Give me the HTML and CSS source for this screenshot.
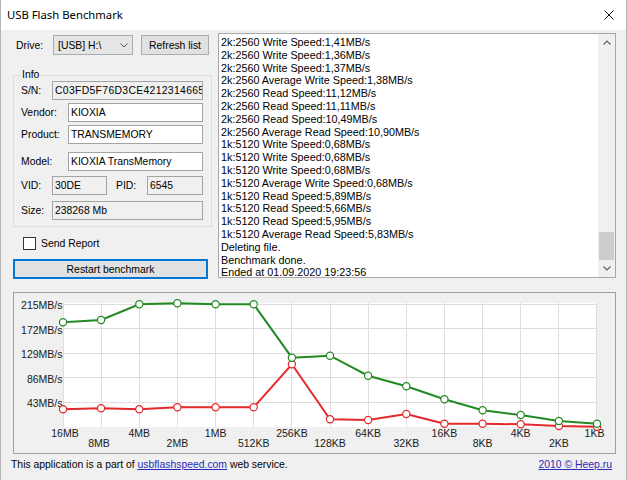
FILE: index.html
```html
<!DOCTYPE html>
<html>
<head>
<meta charset="utf-8">
<title>USB Flash Benchmark</title>
<link rel="stylesheet" href="styles.css">
</head>
<body>
<div class="window">
  <div class="titlebar">
    <span class="title">USB Flash Benchmark</span>
    <svg class="close" width="10" height="10" viewBox="0 0 10 10"><path d="M0.5 0.5L9.5 9.5M9.5 0.5L0.5 9.5" stroke="#111" stroke-width="1" fill="none"/></svg>
  </div>
  <div class="content">
    <div class="top">
      <div class="left">
        <div class="drive-row">
          <span class="lbl drive-lbl">Drive:</span>
          <div class="combo"><span>[USB] H:\</span><svg width="8" height="5" viewBox="0 0 8 5"><path d="M0.5 0.5L4 4L7.5 0.5" stroke="#555" stroke-width="1" fill="none"/></svg></div>
          <div class="btn refresh">Refresh list</div>
        </div>
        <fieldset class="info">
          <legend>Info</legend>
          <div class="row"><span class="lbl w31">S/N:</span><div class="tb ro w151 serial">C03FD5F76D3CE42123146653</div></div>
          <div class="row mt3"><span class="lbl w47">Vendor:</span><div class="tb w135">KIOXIA</div></div>
          <div class="row mt3"><span class="lbl w47">Product:</span><div class="tb w135">TRANSMEMORY</div></div>
          <div class="row mt8"><span class="lbl w47">Model:</span><div class="tb w135">KIOXIA TransMemory</div></div>
          <div class="row mt5"><span class="lbl w31">VID:</span><div class="tb ro w55">30DE</div><span class="lbl pid-lbl">PID:</span><div class="tb ro w56">6545</div></div>
          <div class="row mt6"><span class="lbl w31">Size:</span><div class="tb ro w151">238268 Mb</div></div>
        </fieldset>
        <div class="check"><span class="box"></span><span class="check-lbl">Send Report</span></div>
        <div class="btn restart">Restart benchmark</div>
      </div>
      <div class="log">
        <div class="log-text">
          <div>2k:2560 Write Speed:1,41MB/s</div>
          <div>2k:2560 Write Speed:1,36MB/s</div>
          <div>2k:2560 Write Speed:1,37MB/s</div>
          <div>2k:2560 Average Write Speed:1,38MB/s</div>
          <div>2k:2560 Read Speed:11,12MB/s</div>
          <div>2k:2560 Read Speed:11,11MB/s</div>
          <div>2k:2560 Read Speed:10,49MB/s</div>
          <div>2k:2560 Average Read Speed:10,90MB/s</div>
          <div>1k:5120 Write Speed:0,68MB/s</div>
          <div>1k:5120 Write Speed:0,68MB/s</div>
          <div>1k:5120 Write Speed:0,68MB/s</div>
          <div>1k:5120 Average Write Speed:0,68MB/s</div>
          <div>1k:5120 Read Speed:5,89MB/s</div>
          <div>1k:5120 Read Speed:5,66MB/s</div>
          <div>1k:5120 Read Speed:5,95MB/s</div>
          <div>1k:5120 Average Read Speed:5,83MB/s</div>
          <div>Deleting file.</div>
          <div>Benchmark done.</div>
          <div>Ended at 01.09.2020 19:23:56</div>
        </div>
        <div class="scrollbar">
          <div class="sb-btn"><svg width="8" height="5" viewBox="0 0 8 5"><path d="M0.5 4.5L4 1L7.5 4.5" stroke="#606060" stroke-width="1.2" fill="none"/></svg></div>
          <div class="sb-track"><div class="sb-thumb"></div></div>
          <div class="sb-btn"><svg width="8" height="5" viewBox="0 0 8 5"><path d="M0.5 0.5L4 4L7.5 0.5" stroke="#606060" stroke-width="1.2" fill="none"/></svg></div>
        </div>
      </div>
    </div>
    <div class="chart">
      <svg class="chart-svg" width="601" height="160" viewBox="0 0 601 160">
        <rect x="49" y="10" width="534" height="124" fill="#fff"/>
        <g stroke="#dedede" stroke-width="1" fill="none">
          <path d="M49.5 10V134M87.5 10V134M125.5 10V134M163.5 10V134M201.5 10V134M239.5 10V134M277.5 10V134M316.5 10V134M354.5 10V134M392.5 10V134M430.5 10V134M468.5 10V134M506.5 10V134M544.5 10V134M582.5 10V134"/>
          <path d="M49 11.5H583M49 35.5H583M49 60.5H583M49 84.5H583M49 109.5H583"/>
        </g>
        <g class="ylab" text-anchor="end">
          <text x="48.5" y="16">215MB/s</text>
          <text x="48.5" y="40.6">172MB/s</text>
          <text x="48.5" y="65.2">129MB/s</text>
          <text x="48.5" y="89.8">86MB/s</text>
          <text x="48.5" y="114.4">43MB/s</text>
        </g>
        <g class="xlab" text-anchor="middle">
          <text x="51" y="143.8">16MB</text>
          <text x="85" y="153.8">8MB</text>
          <text x="125.3" y="143.8">4MB</text>
          <text x="163.4" y="153.8">2MB</text>
          <text x="201.6" y="143.8">1MB</text>
          <text x="239.7" y="153.8">512KB</text>
          <text x="277.9" y="143.8">256KB</text>
          <text x="316" y="153.8">128KB</text>
          <text x="354.1" y="143.8">64KB</text>
          <text x="392.3" y="153.8">32KB</text>
          <text x="430.4" y="143.8">16KB</text>
          <text x="468.6" y="153.8">8KB</text>
          <text x="506.7" y="143.8">4KB</text>
          <text x="544.9" y="153.8">2KB</text>
          <text x="580.5" y="143.8">1KB</text>
        </g>
        <g stroke="#e3292b" fill="none">
          <polyline stroke-width="2" points="49,116.3 87.1,115.3 125.3,116.3 163.4,114.3 201.6,114.3 239.7,114.3 277.9,71.3 316,126.3 354.1,127 392.3,121 430.4,130.7 468.6,130.7 506.7,131.3 544.9,133 583,133.7"/>
          <g fill="#fff" stroke-width="1.2">
            <circle cx="49" cy="116.3" r="3.6"/><circle cx="87.1" cy="115.3" r="3.6"/><circle cx="125.3" cy="116.3" r="3.6"/><circle cx="163.4" cy="114.3" r="3.6"/><circle cx="201.6" cy="114.3" r="3.6"/><circle cx="239.7" cy="114.3" r="3.6"/><circle cx="277.9" cy="71.3" r="3.6"/><circle cx="316" cy="126.3" r="3.6"/><circle cx="354.1" cy="127" r="3.6"/><circle cx="392.3" cy="121" r="3.6"/><circle cx="430.4" cy="130.7" r="3.6"/><circle cx="468.6" cy="130.7" r="3.6"/><circle cx="506.7" cy="131.3" r="3.6"/><circle cx="544.9" cy="133" r="3.6"/><circle cx="583" cy="133.7" r="3.6"/>
          </g>
        </g>
        <g stroke="#238a23" fill="none">
          <polyline stroke-width="2" points="49,29.3 87.1,27 125.3,11.3 163.4,10.3 201.6,11.3 239.7,11.3 277.9,64.7 316,62.7 354.1,82.7 392.3,93.3 430.4,106.3 468.6,117.3 506.7,122 544.9,128 583,130.7"/>
          <g fill="#fff" stroke-width="1.2">
            <circle cx="49" cy="29.3" r="3.6"/><circle cx="87.1" cy="27" r="3.6"/><circle cx="125.3" cy="11.3" r="3.6"/><circle cx="163.4" cy="10.3" r="3.6"/><circle cx="201.6" cy="11.3" r="3.6"/><circle cx="239.7" cy="11.3" r="3.6"/><circle cx="277.9" cy="64.7" r="3.6"/><circle cx="316" cy="62.7" r="3.6"/><circle cx="354.1" cy="82.7" r="3.6"/><circle cx="392.3" cy="93.3" r="3.6"/><circle cx="430.4" cy="106.3" r="3.6"/><circle cx="468.6" cy="117.3" r="3.6"/><circle cx="506.7" cy="122" r="3.6"/><circle cx="544.9" cy="128" r="3.6"/><circle cx="583" cy="130.7" r="3.6"/>
          </g>
        </g>
      </svg>
    </div>
  </div>
  <div class="footer">
    <span>This application is a part of <a class="link" href="#">usbflashspeed.com</a> web service.</span>
    <a class="link" href="#">2010 © Heep.ru</a>
  </div>
</div>
</body>
</html>
```
FILE: styles.css
```css
* { box-sizing: border-box; }
html, body { margin: 0; padding: 0; }
body {
  width: 627px;
  height: 480px;
  overflow: hidden;
  background: #f0f0f0;
  font-family: "Liberation Sans", Arial, sans-serif;
  font-size: 10.4px;
  color: #000;
}
.window {
  width: 627px;
  height: 480px;
  border-left: 1px solid #b5b5b5;
  border-right: 1px solid #b5b5b5;
  display: flex;
  flex-direction: column;
}
.titlebar {
  height: 30px;
  flex: none;
  background: #fff;
  display: flex;
  align-items: center;
  justify-content: space-between;
  padding-left: 6px;
}
.title {
  font-family: "Noto Sans", "Open Sans", sans-serif;
  font-size: 11.3px;
  color: #000;
  margin-top: -1px;
}
.close { margin-right: 12px; display: block; }
.content {
  padding: 0 10px 0 12px;
  display: flex;
  flex-direction: column;
}
.top {
  display: flex;
  align-items: flex-start;
  gap: 5px;
  height: 248px;
}
.left {
  width: 200px;
  display: flex;
  flex-direction: column;
}
.drive-row {
  display: flex;
  align-items: center;
  margin-top: 5px;
  height: 20px;
}
.lbl { flex: none; white-space: nowrap; }
.drive-lbl { width: 37px; margin-left: 3px; }
.combo {
  width: 80px;
  height: 20px;
  border: 1px solid #acacac;
  background: #e5e5e5;
  display: flex;
  align-items: center;
  justify-content: space-between;
  padding: 0 4px;
}
.combo svg { display: block; }
.btn {
  background: #e1e1e1;
  border: 1px solid #adadad;
  display: flex;
  align-items: center;
  justify-content: center;
  white-space: nowrap;
}
.refresh { margin-left: 8px; width: 68px; height: 20px; }
.info {
  margin: 14px 0 0 0;
  width: 199px;
  min-width: 0;
  border: 1px solid #dcdcdc;
  padding: 0 0 6px 7px;
}
.info legend {
  padding: 0 1px;
  line-height: 12px;
  font-size: 10.4px;
}
.row {
  display: flex;
  align-items: center;
  height: 19px;
}
.mt3 { margin-top: 3px; }
.mt5 { margin-top: 5px; }
.mt6 { margin-top: 6px; }
.mt8 { margin-top: 8px; }
.w31 { width: 31px; }
.w47 { width: 47px; }
.pid-lbl { margin-left: 9px; width: 31px; }
.tb {
  height: 19px;
  border: 1px solid #a4a4a4;
  background: #fff;
  padding-left: 2px;
  line-height: 17px;
  white-space: nowrap;
  overflow: hidden;
  flex: none;
}
.tb.ro { background: #f0f0f0; }
.serial { letter-spacing: 0.32px; }
.w151 { width: 151px; }
.w135 { width: 135px; }
.w55 { width: 55px; }
.w56 { width: 56px; }
.check {
  margin-top: 10px;
  height: 13px;
  display: flex;
  align-items: center;
  padding-left: 10px;
}
.box {
  width: 13px;
  height: 13px;
  border: 1px solid #333;
  background: #fff;
  flex: none;
}
.check-lbl { margin-left: 5px; }
.restart {
  margin-top: 9px;
  width: 195px;
  height: 20px;
  border: 2px solid #0078d7;
}
.log {
  margin-top: 3px;
  width: 398px;
  height: 245px;
  border: 1px solid #a8a8a8;
  background: #fff;
  display: flex;
}
.log-text {
  flex: 1;
  padding: 2px 0 0 2px;
  font-size: 10.8px;
  line-height: 12.8px;
  overflow: hidden;
  white-space: nowrap;
}
.scrollbar {
  width: 17px;
  flex: none;
  background: #f0f0f0;
  display: flex;
  flex-direction: column;
}
.sb-btn {
  height: 17px;
  flex: none;
  display: flex;
  align-items: center;
  justify-content: center;
}
.sb-btn svg { display: block; }
.sb-track {
  flex: 1;
  display: flex;
  flex-direction: column;
  justify-content: flex-end;
}
.sb-thumb {
  height: 28px;
  margin: 0 1px;
  background: #cdcdcd;
}
.chart {
  margin-top: 14px;
  width: 603px;
  height: 162px;
  border: 1px solid #a0a0a0;
  background: #f0f0f0;
}
.chart-svg { display: block; }
.chart-svg text {
  font-family: "Liberation Sans", Arial, sans-serif;
  font-size: 10.5px;
  fill: #1a1a1a;
}
.footer {
  flex: none;
  display: flex;
  justify-content: space-between;
  padding: 5px 14px 0 10px;
  line-height: 12px;
}
.link { color: #2a2ab8; text-decoration: underline; }
```
